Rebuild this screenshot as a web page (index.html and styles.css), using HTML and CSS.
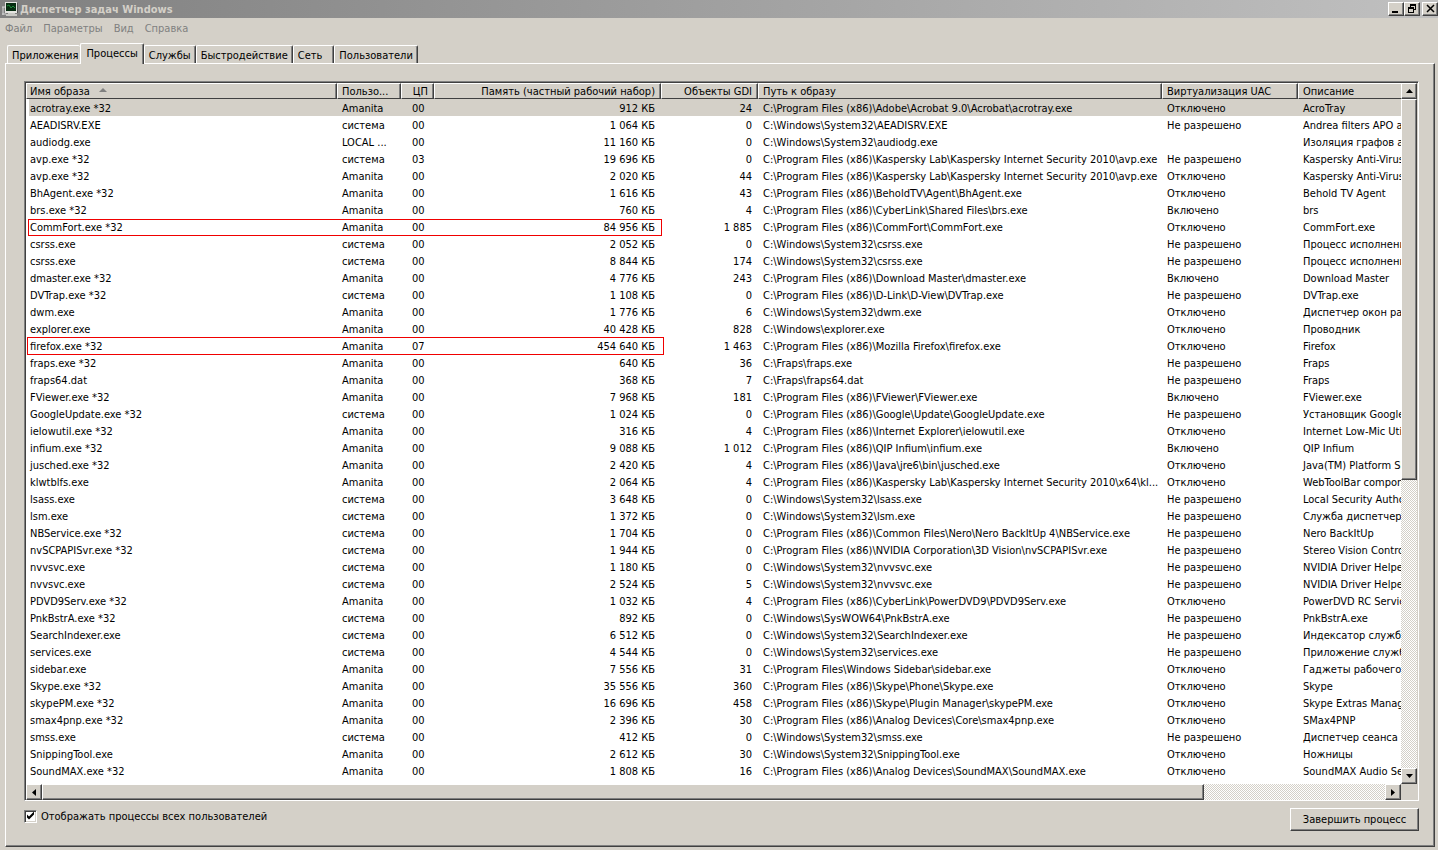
FILE: index.html
```
<!DOCTYPE html>
<html lang="ru">
<head>
<meta charset="utf-8">
<title>Диспетчер задач Windows</title>
<link rel="stylesheet" href="styles.css">
</head>
<body>
<header class="titlebar">
  <svg class="app-icon" width="16" height="16" viewBox="0 0 16 16" aria-hidden="true">
    <path d="M1 6v8M0 6h3M0 13h4" stroke="#d8d8d8" fill="none"/>
    <rect x="3" y="1" width="12" height="11" fill="#e4e4e0"/>
    <rect x="4" y="2" width="10" height="8" fill="#062c10"/>
    <path d="M5 5l2-1 2 3 2-2 2 2" stroke="#1f8a3c" fill="none"/>
    <path d="M6 12h7v1h2v2H4v-2h2z" fill="#c8c8c4"/>
    <path d="M15.500 2v10" stroke="#555"/>
  </svg>
  <h1 class="title">Диспетчер задач Windows</h1>
  <div class="window-buttons">
    <button class="win-btn" type="button" aria-label="Свернуть"><svg width="12" height="11" viewBox="0 0 12 11"><path d="M2 8h6v2H2z"/></svg></button>
    <button class="win-btn" type="button" aria-label="Восстановить"><svg width="12" height="11" viewBox="0 0 12 11"><path d="M4 1h6v6H8V6h1V3H5v1H4zM2 4h6v6H2zM3 6v3h4V6z" fill-rule="evenodd"/></svg></button>
    <button class="win-btn win-close" type="button" aria-label="Закрыть"><svg width="12" height="11" viewBox="0 0 12 11"><path d="M3 2l7 7M10 2l-7 7" stroke="#000" stroke-width="1.500"/></svg></button>
  </div>
</header>
<nav class="menu">
  <button class="menu-item" type="button">Файл</button>
  <button class="menu-item" type="button">Параметры</button>
  <button class="menu-item" type="button">Вид</button>
  <button class="menu-item" type="button">Справка</button>
</nav>
<main class="content">
  <div class="tabs" role="tablist">
    <button class="tab tab-before" type="button" role="tab">Приложения</button>
    <button class="tab tab-active" type="button" role="tab" aria-selected="true">Процессы</button>
    <button class="tab" type="button" role="tab">Службы</button>
    <button class="tab" type="button" role="tab">Быстродействие</button>
    <button class="tab tab-short" type="button" role="tab">Сеть</button>
    <button class="tab" type="button" role="tab">Пользователи</button>
  </div>
  <section class="panel">
    <div class="list">
      <div class="viewport">
        <table class="processes">
          <colgroup>
            <col class="col-name"><col class="col-user"><col class="col-cpu"><col class="col-mem"><col class="col-gdi"><col class="col-path"><col class="col-uac"><col>
          </colgroup>
          <thead>
            <tr>
              <th>Имя образа<svg class="sort" width="8" height="4" viewBox="0 0 8 4" aria-hidden="true"><path d="M0 4l4-4 4 4z" fill="#808080"/></svg></th>
              <th>Пользо...</th><th class="num">ЦП</th><th class="num">Память (частный рабочий набор)</th><th class="num">Объекты GDI</th><th>Путь к образу</th><th>Виртуализация UAC</th><th class="last">Описание</th>
            </tr>
          </thead>
          <tbody id="rows"></tbody>
        </table>
      </div>
      <div class="scroll scroll-v">
        <button class="scroll-btn" type="button" aria-label="Вверх"><svg width="7" height="4" viewBox="0 0 7 4"><path d="M0 4L3.500 0 7 4z"/></svg></button>
        <div class="track"><div class="thumb thumb-v"></div></div>
        <button class="scroll-btn" type="button" aria-label="Вниз"><svg width="7" height="4" viewBox="0 0 7 4"><path d="M0 0h7L3.500 4z"/></svg></button>
      </div>
      <div class="scroll scroll-h">
        <button class="scroll-btn" type="button" aria-label="Влево"><svg width="4" height="7" viewBox="0 0 4 7"><path d="M4 0v7L0 3.500z"/></svg></button>
        <div class="track"><div class="thumb thumb-h"></div></div>
        <button class="scroll-btn" type="button" aria-label="Вправо"><svg width="4" height="7" viewBox="0 0 4 7"><path d="M0 0v7l4-3.500z"/></svg></button>
      </div>
    </div>
    <footer class="actions">
      <label class="check"><input class="check-box" type="checkbox" checked>Отображать процессы всех пользователей</label>
      <button class="end-btn" type="button">Завершить процесс</button>
    </footer>
  </section>
</main>
<script src="rows.js"></script>
</body>
</html>
```
FILE: styles.css
```
* { box-sizing: border-box; }

body {
  margin: 0;
  height: 100vh;
  display: flex;
  flex-direction: column;
  overflow: hidden;
  background: #d4d0c8;
  color: #000;
  font: 11px/13px "DejaVu Sans Condensed", "DejaVu Sans", sans-serif;
}

button {
  margin: 0;
  padding: 0;
  border: 0;
  background: none;
  color: inherit;
  font: inherit;
}

.titlebar {
  display: flex;
  align-items: center;
  height: 18px;
  padding: 0 0 0 2px;
  background: linear-gradient(to right, #808080, #c0c0c0);
}

.app-icon { flex: none; }

.title {
  flex: 1;
  margin: 0 0 0 2px;
  color: #d4d0c8;
  font-size: 11px;
  font-weight: bold;
}

.window-buttons { display: flex; }

.win-btn, .scroll-btn, .thumb, .end-btn {
  background: #d4d0c8;
  border: 1px solid;
  border-color: #fff #404040 #404040 #fff;
  box-shadow: inset -1px -1px #808080;
}

.win-btn {
  display: flex;
  width: 16px;
  height: 14px;
  padding: 0 1px;
}

.win-close { margin-left: 2px; }

.menu {
  display: flex;
  gap: 11px;
  padding: 4px 5px 0;
  height: 25px;
  color: #808080;
}

.menu-item { height: 13px; }

.content {
  flex: 1;
  min-height: 0;
  display: flex;
  flex-direction: column;
  padding: 0 3px 3px 5px;
}

.tabs {
  display: flex;
  align-items: flex-end;
  height: 20px;
  padding-left: 2px;
}

.tab {
  height: 18px;
  padding: 1px 4px 0;
  border: 1px solid;
  border-color: #fff #404040 #fff #fff;
  border-bottom: 0;
  border-radius: 2px 2px 0 0;
  box-shadow: inset -1px 0 #808080;
}

.tab-before {
  padding-right: 2px;
  border-right: 0;
  box-shadow: none;
}

.tab-active {
  height: 21px;
  margin-bottom: -1px;
  padding: 0 5px 2px;
  background: #d4d0c8;
  position: relative;
}

.tab-short { padding-right: 11px; }

.panel {
  flex: 1;
  min-height: 0;
  display: flex;
  flex-direction: column;
  padding: 17px 15px 15px 18px;
  border: 1px solid;
  border-color: #fff #404040 #404040 #fff;
  box-shadow: inset -1px -1px #808080;
}

.list {
  flex: 1;
  min-height: 0;
  display: grid;
  grid-template: minmax(0, 1fr) 16px / minmax(0, 1fr) 16px;
  border: 1px solid;
  border-color: #808080 #fff #fff #808080;
  box-shadow: inset 1px 1px #404040;
  padding: 1px 1px 0 1px;
}

.viewport {
  overflow: hidden;
  background: #fff;
}

.processes {
  width: 100%;
  table-layout: fixed;
  border-collapse: separate;
  border-spacing: 0;
}

.col-name { width: 311px; }
.col-user { width: 64px; }
.col-cpu { width: 33px; }
.col-mem { width: 227px; }
.col-gdi { width: 97px; }
.col-path { width: 404px; }
.col-uac { width: 136px; }

.processes th {
  height: 16px;
  padding: 0 4px;
  background: #d4d0c8;
  border: 1px solid;
  border-color: #fff #404040 #404040 #fff;
  box-shadow: inset -1px 0 #808080;
  font-weight: normal;
  text-align: left;
  white-space: nowrap;
}

.processes .last {
  border-right: 0;
  box-shadow: none;
}

.processes td {
  height: 17px;
  padding: 3px 5px 1px;
  white-space: nowrap;
}

.processes td:first-child {
  position: relative;
  padding-left: 4px;
}

.processes th:first-child { padding-left: 3px; }

.processes .num {
  text-align: right;
  padding-right: 6px;
}

.processes th.num { padding-right: 5px; }

.processes .cpu { padding-left: 11px; }

.sort { margin: 0 0 3px 9px; }

.selected td { background: #d4d0c8; }
.selected td:first-child { background: linear-gradient(to right, #fff 3px, #d4d0c8 3px); }

.mark {
  position: absolute;
  left: 2px;
  top: 1px;
  width: 634px;
  height: 17px;
  border: 1px solid #f00000;
}

.mark-large {
  left: 1px;
  top: 0;
  width: 637px;
  height: 18px;
}

.scroll { display: flex; }
.scroll-v { flex-direction: column; }

.scroll-btn {
  flex: none;
  width: 16px;
  height: 16px;
  display: flex;
  align-items: center;
  justify-content: center;
}

.track {
  flex: 1;
  min-height: 0;
  background: repeating-conic-gradient(#fff 0 25%, #d4d0c8 0 50%) 0 0 / 2px 2px;
}

.thumb-v { height: 57%; }
.thumb-h { width: 86.5%; height: 16px; }

.actions {
  display: flex;
  justify-content: space-between;
  align-items: flex-start;
  padding-top: 7px;
}

.check {
  display: flex;
  align-items: center;
  gap: 4px;
  height: 16px;
}

.check-box {
  appearance: none;
  width: 13px;
  height: 13px;
  margin: 0;
  border: 1px solid;
  border-color: #808080 #fff #fff #808080;
  box-shadow: inset 1px 1px #404040, inset -1px -1px #d4d0c8;
  background: #fff;
}

.check-box:checked::before {
  content: "";
  display: block;
  width: 11px;
  height: 11px;
  background: #000;
  clip-path: polygon(2px 4px, 4px 6px, 9px 1px, 9px 4px, 4px 9px, 2px 7px);
}

.end-btn {
  width: 129px;
  height: 23px;
}
```
FILE: rows.js
```
const P = "C:\\Program Files (x86)\\";
const S = "C:\\Windows\\System32\\";
const A = "Amanita";
const SYS = "система";
const OFF = "Отключено";
const ON = "Включено";
const NO = "Не разрешено";

// name, user, cpu, memory, GDI objects, path, UAC virtualization, description
const processes = [
  ["acrotray.exe *32", A, "00", "912", "24", P + "Adobe\\Acrobat 9.0\\Acrobat\\acrotray.exe", OFF, "AcroTray"],
  ["AEADISRV.EXE", SYS, "00", "1 064", "0", S + "AEADISRV.EXE", NO, "Andrea filters APO access service"],
  ["audiodg.exe", "LOCAL ...", "00", "11 160", "0", S + "audiodg.exe", "", "Изоляция графов аудиоустройств"],
  ["avp.exe *32", SYS, "03", "19 696", "0", P + "Kaspersky Lab\\Kaspersky Internet Security 2010\\avp.exe", NO, "Kaspersky Anti-Virus"],
  ["avp.exe *32", A, "00", "2 020", "44", P + "Kaspersky Lab\\Kaspersky Internet Security 2010\\avp.exe", OFF, "Kaspersky Anti-Virus"],
  ["BhAgent.exe *32", A, "00", "1 616", "43", P + "BeholdTV\\Agent\\BhAgent.exe", OFF, "Behold TV Agent"],
  ["brs.exe *32", A, "00", "760", "4", P + "CyberLink\\Shared Files\\brs.exe", ON, "brs"],
  ["CommFort.exe *32", A, "00", "84 956", "1 885", P + "CommFort\\CommFort.exe", OFF, "CommFort.exe"],
  ["csrss.exe", SYS, "00", "2 052", "0", S + "csrss.exe", NO, "Процесс исполнения"],
  ["csrss.exe", SYS, "00", "8 844", "174", S + "csrss.exe", NO, "Процесс исполнения"],
  ["dmaster.exe *32", A, "00", "4 776", "243", P + "Download Master\\dmaster.exe", ON, "Download Master"],
  ["DVTrap.exe *32", SYS, "00", "1 108", "0", P + "D-Link\\D-View\\DVTrap.exe", NO, "DVTrap.exe"],
  ["dwm.exe", A, "00", "1 776", "6", S + "dwm.exe", OFF, "Диспетчер окон рабочего стола"],
  ["explorer.exe", A, "00", "40 428", "828", "C:\\Windows\\explorer.exe", OFF, "Проводник"],
  ["firefox.exe *32", A, "07", "454 640", "1 463", P + "Mozilla Firefox\\firefox.exe", OFF, "Firefox"],
  ["fraps.exe *32", A, "00", "640", "36", "C:\\Fraps\\fraps.exe", NO, "Fraps"],
  ["fraps64.dat", A, "00", "368", "7", "C:\\Fraps\\fraps64.dat", NO, "Fraps"],
  ["FViewer.exe *32", A, "00", "7 968", "181", P + "FViewer\\FViewer.exe", ON, "FViewer.exe"],
  ["GoogleUpdate.exe *32", SYS, "00", "1 024", "0", P + "Google\\Update\\GoogleUpdate.exe", NO, "Установщик Google"],
  ["ielowutil.exe *32", A, "00", "316", "4", P + "Internet Explorer\\ielowutil.exe", OFF, "Internet Low-Mic Utility Tool"],
  ["infium.exe *32", A, "00", "9 088", "1 012", P + "QIP Infium\\infium.exe", ON, "QIP Infium"],
  ["jusched.exe *32", A, "00", "2 420", "4", P + "Java\\jre6\\bin\\jusched.exe", OFF, "Java(TM) Platform SE binary"],
  ["klwtblfs.exe", A, "00", "2 064", "4", P + "Kaspersky Lab\\Kaspersky Internet Security 2010\\x64\\kl...", OFF, "WebToolBar component"],
  ["lsass.exe", SYS, "00", "3 648", "0", S + "lsass.exe", NO, "Local Security Authority Process"],
  ["lsm.exe", SYS, "00", "1 372", "0", S + "lsm.exe", NO, "Служба диспетчера"],
  ["NBService.exe *32", SYS, "00", "1 704", "0", P + "Common Files\\Nero\\Nero BackItUp 4\\NBService.exe", NO, "Nero BackItUp"],
  ["nvSCPAPISvr.exe *32", SYS, "00", "1 944", "0", P + "NVIDIA Corporation\\3D Vision\\nvSCPAPISvr.exe", NO, "Stereo Vision Control Panel"],
  ["nvvsvc.exe", SYS, "00", "1 180", "0", S + "nvvsvc.exe", NO, "NVIDIA Driver Helper Service"],
  ["nvvsvc.exe", SYS, "00", "2 524", "5", S + "nvvsvc.exe", NO, "NVIDIA Driver Helper Service"],
  ["PDVD9Serv.exe *32", A, "00", "1 032", "4", P + "CyberLink\\PowerDVD9\\PDVD9Serv.exe", OFF, "PowerDVD RC Service"],
  ["PnkBstrA.exe *32", SYS, "00", "892", "0", "C:\\Windows\\SysWOW64\\PnkBstrA.exe", NO, "PnkBstrA.exe"],
  ["SearchIndexer.exe", SYS, "00", "6 512", "0", S + "SearchIndexer.exe", NO, "Индексатор службы"],
  ["services.exe", SYS, "00", "4 544", "0", S + "services.exe", NO, "Приложение служб"],
  ["sidebar.exe", A, "00", "7 556", "31", "C:\\Program Files\\Windows Sidebar\\sidebar.exe", OFF, "Гаджеты рабочего стола"],
  ["Skype.exe *32", A, "00", "35 556", "360", P + "Skype\\Phone\\Skype.exe", OFF, "Skype"],
  ["skypePM.exe *32", A, "00", "16 696", "458", P + "Skype\\Plugin Manager\\skypePM.exe", OFF, "Skype Extras Manager"],
  ["smax4pnp.exe *32", A, "00", "2 396", "30", P + "Analog Devices\\Core\\smax4pnp.exe", OFF, "SMax4PNP"],
  ["smss.exe", SYS, "00", "412", "0", S + "smss.exe", NO, "Диспетчер сеанса"],
  ["SnippingTool.exe", A, "00", "2 612", "30", S + "SnippingTool.exe", OFF, "Ножницы"],
  ["SoundMAX.exe *32", A, "00", "1 808", "16", P + "Analog Devices\\SoundMAX\\SoundMAX.exe", OFF, "SoundMAX Audio Settings"]
];

const marks = {
  "CommFort.exe *32": "mark",
  "firefox.exe *32": "mark mark-large"
};
const body = document.getElementById("rows");

processes.forEach((row, index) => {
  const tr = body.insertRow();
  if (index === 0) tr.className = "selected";
  row.forEach((value, column) => {
    const td = tr.insertCell();
    td.textContent = column === 3 ? value + " КБ" : value;
    if (column === 3 || column === 4) td.className = "num";
    if (column === 2) td.className = "cpu";
    if (column === 0 && marks[value]) {
      const mark = document.createElement("span");
      mark.className = marks[value];
      td.append(mark);
    }
  });
});
```
